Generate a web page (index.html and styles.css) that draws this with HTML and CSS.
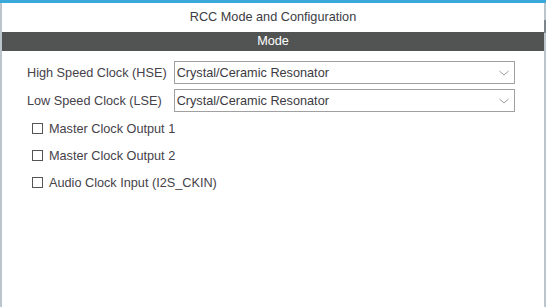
FILE: index.html
```html
<!DOCTYPE html>
<html lang="en">
<head>
    <meta charset="UTF-8">
    <title>RCC Mode and Configuration</title>
    <link rel="stylesheet" href="styles.css">
</head>
<body>
<div class="topline"></div>
<div class="panel">
    <div class="panel-title">RCC Mode and Configuration</div>
    <div class="section-bar">Mode</div>

    <div class="mode-form">
        <div class="fields">
            <label for="hse">High Speed Clock (HSE)</label>
            <div class="select-box" id="hse">
                <span>Crystal/Ceramic Resonator</span>
                <svg class="chevron" width="10" height="6" viewBox="0 0 10 6"><path d="M0.5 1 L5 5 L9.5 1" fill="none" stroke="#9a9a9a" stroke-width="1"/></svg>
            </div>
            <label for="lse">Low Speed Clock (LSE)</label>
            <div class="select-box" id="lse">
                <span>Crystal/Ceramic Resonator</span>
                <svg class="chevron" width="10" height="6" viewBox="0 0 10 6"><path d="M0.5 1 L5 5 L9.5 1" fill="none" stroke="#9a9a9a" stroke-width="1"/></svg>
            </div>
        </div>

        <div class="checks">
            <div class="check-row"><span class="box"></span>Master Clock Output 1</div>
            <div class="check-row"><span class="box"></span>Master Clock Output 2</div>
            <div class="check-row"><span class="box"></span>Audio Clock Input (I2S_CKIN)</div>
        </div>
    </div>
    <div class="scroll-thumb"></div>
</div>
</body>
</html>
```

FILE: styles.css
```css
body {
    margin: 0;
    background-color: #fff;
    font-family: "Liberation Sans", Arial, sans-serif;
    font-size: 12.7px;
    color: #45424a;
}

.topline {
    height: 3px;
    background-color: #3ba8dc;
}

.panel {
    position: relative;
    height: 304px;
    border-left: 2px solid #bac5cd;
    border-right: 2px solid #bac5cd;
    box-sizing: border-box;
}

.panel-title {
    height: 29px;
    line-height: 29px;
    text-align: center;
    color: #3c3c44;
}

.section-bar {
    height: 19px;
    line-height: 19px;
    text-align: center;
    background-color: #525453;
    color: #fff;
}

.mode-form {
    padding: 10px 29px 0 25px;
}

.fields {
    display: grid;
    grid-template-columns: auto 1fr;
    column-gap: 7px;
    row-gap: 5px;
    align-items: center;
}

.fields label {
    white-space: nowrap;
}

.select-box {
    display: flex;
    align-items: center;
    justify-content: space-between;
    height: 23px;
    box-sizing: border-box;
    border: 1px solid #a0a0a0;
    padding: 0 5px 0 2px;
    color: #3c3a42;
}

.chevron {
    display: block;
}

.checks {
    padding-left: 5px;
    margin-top: 3px;
}

.check-row {
    display: flex;
    align-items: center;
    height: 27px;
}

.box {
    width: 11px;
    height: 11px;
    box-sizing: border-box;
    border: 1px solid #555;
    margin-right: 6px;
}

.scroll-thumb {
    position: absolute;
    top: 17px;
    right: -2px;
    width: 2px;
    height: 13px;
    background-color: #7d868c;
}
```
